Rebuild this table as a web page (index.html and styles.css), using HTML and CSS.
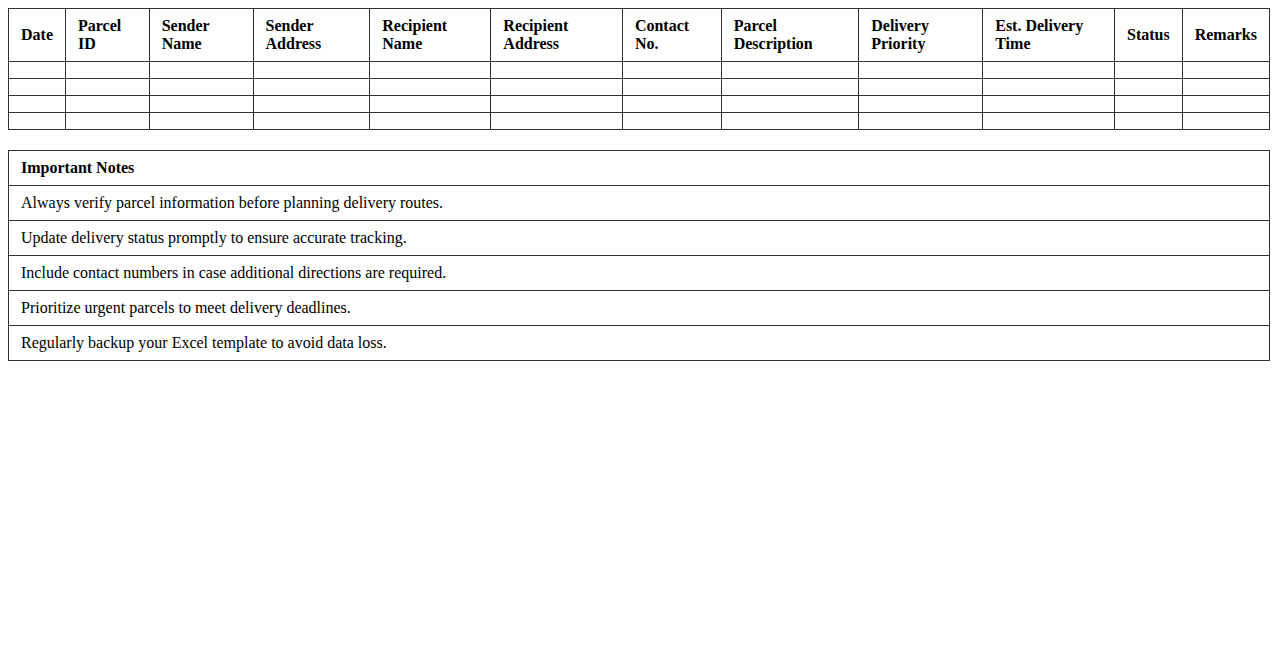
FILE: index.html
```html
<!DOCTYPE html>
<html>
<head>
<meta charset="utf-8">
<link rel="stylesheet" href="styles.css">
</head>
<body>
<table class="grid">
  <thead>
    <tr>
      <th>Date</th>
      <th>Parcel ID</th>
      <th>Sender Name</th>
      <th>Sender Address</th>
      <th>Recipient Name</th>
      <th>Recipient Address</th>
      <th>Contact No.</th>
      <th>Parcel Description</th>
      <th>Delivery Priority</th>
      <th>Est. Delivery Time</th>
      <th>Status</th>
      <th>Remarks</th>
    </tr>
  </thead>
  <tbody>
    <tr><td></td><td></td><td></td><td></td><td></td><td></td><td></td><td></td><td></td><td></td><td></td><td></td></tr>
    <tr><td></td><td></td><td></td><td></td><td></td><td></td><td></td><td></td><td></td><td></td><td></td><td></td></tr>
    <tr><td></td><td></td><td></td><td></td><td></td><td></td><td></td><td></td><td></td><td></td><td></td><td></td></tr>
    <tr><td></td><td></td><td></td><td></td><td></td><td></td><td></td><td></td><td></td><td></td><td></td><td></td></tr>
  </tbody>
</table>
<table class="notes">
  <tr><th>Important Notes</th></tr>
  <tr><td>Always verify parcel information before planning delivery routes.</td></tr>
  <tr><td>Update delivery status promptly to ensure accurate tracking.</td></tr>
  <tr><td>Include contact numbers in case additional directions are required.</td></tr>
  <tr><td>Prioritize urgent parcels to meet delivery deadlines.</td></tr>
  <tr><td>Regularly backup your Excel template to avoid data loss.</td></tr>
</table>
</body>
</html>
```
FILE: styles.css
```css
body {
  margin: 8px;
  font-family: "Liberation Serif", "Times New Roman", serif;
  font-size: 16px;
  color: #000;
  background: #fff;
}
table {
  width: 100%;
  border-collapse: collapse;
}
th, td {
  border: 1px solid #333;
  padding: 8px 12px;
  text-align: left;
  line-height: 18px;
}
th {
  font-weight: bold;
}
.grid td {
  line-height: 0;
}
.notes {
  margin-top: 20px;
}
.notes td, .notes th {
  line-height: 18px;
}
```
